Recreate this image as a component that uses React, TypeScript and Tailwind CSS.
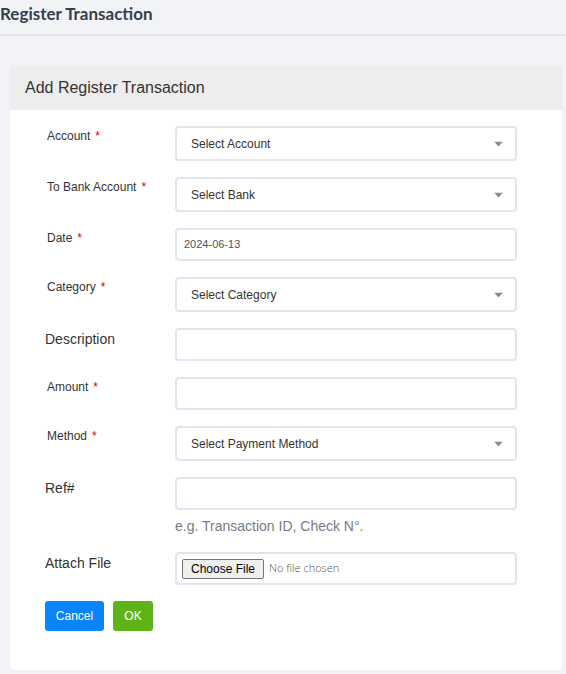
const sans = "font-['Liberation_Sans',Arial,sans-serif]"

type Row = {
	label: string
	required?: boolean
	big?: boolean
	kind: 'select' | 'input' | 'date'
	value?: string
}

const rows: Row[] = [
	{ label: 'Account', required: true, kind: 'select', value: 'Select Account' },
	{ label: 'To Bank Account', required: true, kind: 'select', value: 'Select Bank' },
	{ label: 'Date', required: true, kind: 'date', value: '2024-06-13' },
	{ label: 'Category', required: true, kind: 'select', value: 'Select Category' },
	{ label: 'Description', big: true, kind: 'input' },
	{ label: 'Amount', required: true, kind: 'input' },
	{ label: 'Method', required: true, kind: 'select', value: 'Select Payment Method' },
]

function Caret() {
	return (
		<svg width="9" height="5" viewBox="0 0 9 5" className="absolute right-[12px] top-1/2 -translate-y-1/2">
			<path d="M0 0h9L4.5 5z" fill="#8a8a8a" />
		</svg>
	)
}

function Field({ row }: { row: Row }) {
	const box = 'relative flex w-[342px] items-center rounded-[4px] border-2 border-[#e2e5f0] bg-white'
	if (row.kind === 'select') {
		return (
			<div className={`${box} h-[35px] pl-[14px] text-[12px] text-[#333]`}>
				{row.value}
				<Caret />
			</div>
		)
	}
	if (row.kind === 'date') {
		return (
			<div className={`${box} h-[33px] pl-[7px] text-[11px] text-[#555]`}>{row.value}</div>
		)
	}
	return <div className={`${box} h-[33px]`} />
}

function Label({ text, required, big }: { text: string; required?: boolean; big?: boolean }) {
	return (
		<div
			className={
				big
					? 'pl-[35px] pt-[1px] text-[14px] leading-[20px] text-[#333]'
					: 'pl-[37px] pt-[1px] text-[12px] leading-[18px] text-[#333]'
			}
		>
			{text}
			{required && <span className="ml-[5px] text-[#d40000]">*</span>}
		</div>
	)
}

export default function App() {
	return (
		<div className={`min-h-[674px] bg-[#f2f3f7] ${sans}`}>
			<div className="h-[36px] border-b-2 border-[#e3e5ea]">
				<h1 className="pt-[3px] font-['Lato',sans-serif] text-[17px] font-bold leading-[22px] text-[#363f4c]">
					Register Transaction
				</h1>
			</div>

			<div className="ml-[10px] mt-[30px] w-[552px] overflow-hidden rounded-[3px] bg-white shadow-[0_0_2px_rgba(0,0,0,0.06)]">
				<div className="flex h-[44px] items-center bg-[#ededed] pl-[15px] text-[16px] text-[#333]">
					Add Register Transaction
				</div>

				<div className="pb-[39px] pt-[16px]">
					<div className="flex flex-col gap-[16px]">
						{rows.map((r) => (
							<div key={r.label} className="grid grid-cols-[165px_342px]">
								<Label text={r.label} required={r.required} big={r.big} />
								<Field row={r} />
							</div>
						))}

						<div className="grid grid-cols-[165px_342px]">
							<Label text="Ref#" big />
							<div>
								<div className="h-[33px] w-[342px] rounded-[4px] border-2 border-[#e2e5f0] bg-white" />
								<div className="mt-[6px] text-[14px] leading-[20px] text-[#767b84]">
									e.g. Transaction ID, Check N°.
								</div>
							</div>
						</div>

						<div className="grid grid-cols-[165px_342px]">
							<Label text="Attach File" big />
							<div className="flex h-[33px] w-[342px] items-center rounded-[4px] border-2 border-[#e2e5f0] bg-white pl-[5px]">
								<span className="flex h-[20px] items-center rounded-[2px] border border-[#767676] bg-[#efefef] px-[8px] text-[12px] text-black">
									Choose File
								</span>
								<span className="ml-[5px] font-['Open_Sans',sans-serif] text-[11px] font-light text-[#555]">
									No file chosen
								</span>
							</div>
						</div>
					</div>

					<div className="mt-[16px] flex gap-[9px] pl-[35px]">
						<button className="h-[30px] w-[59px] rounded-[3px] bg-[#0a84fb] text-[12px] text-white">
							Cancel
						</button>
						<button className="h-[30px] w-[40px] rounded-[3px] bg-[#5db318] text-[12px] text-white">
							OK
						</button>
					</div>
				</div>
			</div>
		</div>
	)
}
